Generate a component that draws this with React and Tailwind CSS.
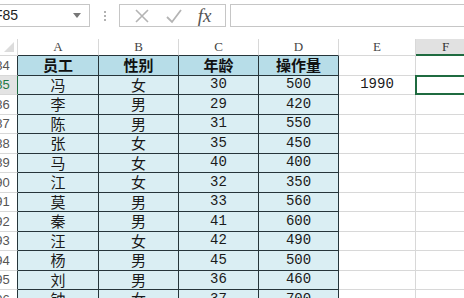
const rows = [
  { n: 85, name: "冯", sex: "女", age: 30, qty: 500, e: "1990" },
  { n: 86, name: "李", sex: "男", age: 29, qty: 420 },
  { n: 87, name: "陈", sex: "男", age: 31, qty: 550 },
  { n: 88, name: "张", sex: "女", age: 35, qty: 450 },
  { n: 89, name: "马", sex: "女", age: 40, qty: 400 },
  { n: 90, name: "江", sex: "女", age: 32, qty: 350 },
  { n: 91, name: "莫", sex: "男", age: 33, qty: 560 },
  { n: 92, name: "秦", sex: "男", age: 41, qty: 600 },
  { n: 93, name: "汪", sex: "女", age: 42, qty: 490 },
  { n: 94, name: "杨", sex: "男", age: 45, qty: 500 },
  { n: 95, name: "刘", sex: "男", age: 36, qty: 460 },
  { n: 96, name: "钟", sex: "女", age: 37, qty: 700 },
];

const cjk = { fontFamily: '"Noto Sans CJK SC", "Noto Sans CJK JP", sans-serif' };
const mono = { fontFamily: '"Liberation Mono", "DejaVu Sans Mono", monospace' };
const serif = { fontFamily: '"Liberation Serif", "DejaVu Serif", serif' };

const dark = "border-[#26353a]";

function RowHead({ n, active }) {
  return (
    <div
      className={`w-[18px] shrink-0 overflow-hidden border-b border-r border-b-[#d8d8d8] ${
        active ? "border-r-[#1f6b40] text-[#1f7a45] bg-[#e3e3e3]" : `${dark} text-[#555] bg-white`
      } flex items-center`}
    >
      <div
        className="w-[31px] shrink-0 -ml-[13px] text-center text-[13px]"
        style={{ fontFamily: '"Liberation Sans", Arial, sans-serif' }}
      >
        {n}
      </div>
    </div>
  );
}

function TCell({ w, children, header, font }) {
  return (
    <div
      className={`${w} shrink-0 border-r border-b ${dark} flex items-center justify-center ${
        header ? "bg-[#b7dde8] font-bold text-[15px] text-[#111]" : "bg-[#daeef3] text-[#1a1a1a]"
      }`}
      style={font}
    >
      {children}
    </div>
  );
}

function PlainCell({ w, children, selected }) {
  return (
    <div
      className={`${w} shrink-0 border-r border-b border-[#d8d8d8] bg-white flex items-center justify-center text-[14px] text-[#1a1a1a] relative`}
      style={mono}
    >
      {children}
      {selected && (
        <div className="absolute -left-[1px] -top-[1px] -right-[1px] -bottom-[1px] border-2 border-[#1f6b40]" />
      )}
    </div>
  );
}

function ColHead({ w, label, border, active }) {
  return (
    <div
      className={`${w} shrink-0 border-r border-r-[#d8d8d8] flex items-center justify-center text-[13px] ${
        active ? "bg-[#e1e1e1] border-b-2 border-b-[#1f6b40] text-[#333]" : `bg-white border-b ${border} text-[#444]`
      }`}
      style={serif}
    >
      {label}
    </div>
  );
}

export default function App() {
  return (
    <div className="w-[464px] h-[298px] overflow-hidden bg-white select-none">
      {/* formula bar */}
      <div className="h-[39px] flex items-start pt-[4px]">
        <div className="w-[94px] h-[23px] -ml-[4px] border border-[#c6c6c6] bg-white flex items-center justify-between pr-[8px] overflow-hidden">
          <span className="text-[14px] text-[#222] -ml-[3px]" style={{ fontFamily: '"Liberation Sans", Arial, sans-serif' }}>
            F85
          </span>
          <svg width="8" height="5" viewBox="0 0 8 5">
            <path d="M0 0 L8 0 L4 5 Z" fill="#777" />
          </svg>
        </div>
        <div className="w-[29px] h-[23px] flex flex-col items-center justify-center gap-[2px]">
          <span className="w-[2px] h-[2px] bg-[#999] rounded-full" />
          <span className="w-[2px] h-[2px] bg-[#999] rounded-full" />
          <span className="w-[2px] h-[2px] bg-[#999] rounded-full" />
        </div>
        <div className="w-[107px] h-[23px] border border-[#c6c6c6] flex items-center justify-around px-[6px]">
          <svg width="16" height="16" viewBox="0 0 16 16">
            <path d="M2 2 L14 14 M14 2 L2 14" stroke="#b4b4b4" strokeWidth="1.6" />
          </svg>
          <svg width="18" height="16" viewBox="0 0 18 16">
            <path d="M2 9 L7 14 L16 2" stroke="#b4b4b4" strokeWidth="1.8" fill="none" />
          </svg>
          <span className="italic text-[19px] text-[#555] leading-none" style={serif}>
            fx
          </span>
        </div>
        <div className="flex-1 h-[23px] ml-[4px] border border-r-0 border-[#c6c6c6] bg-white" />
      </div>

      {/* column headers */}
      <div className="flex h-[17px]">
        <div className="w-[18px] shrink-0 border-r border-b border-[#d8d8d8] bg-white relative overflow-hidden">
          <svg className="absolute right-[3px] bottom-[3px]" width="10" height="10" viewBox="0 0 10 10">
            <path d="M10 0 L10 10 L0 10 Z" fill="#dcdcdc" />
          </svg>
        </div>
        <ColHead w="w-[81px]" label="A" border={dark} />
        <ColHead w="w-[80px]" label="B" border={dark} />
        <ColHead w="w-[80px]" label="C" border={dark} />
        <ColHead w="w-[80px]" label="D" border={dark} />
        <ColHead w="w-[77px]" label="E" border="border-b-[#d8d8d8]" />
        <ColHead w="w-[60px]" label="F" active />
      </div>

      {/* table header row */}
      <div className="flex h-[19.5px]">
        <RowHead n={84} />
        <TCell w="w-[81px]" header font={cjk}>员工</TCell>
        <TCell w="w-[80px]" header font={cjk}>性别</TCell>
        <TCell w="w-[80px]" header font={cjk}>年龄</TCell>
        <TCell w="w-[80px]" header font={cjk}>操作量</TCell>
        <PlainCell w="w-[77px]" />
        <PlainCell w="w-[60px]" />
      </div>

      {rows.map((r) => (
        <div key={r.n} className="flex h-[19.5px]">
          <RowHead n={r.n} active={r.n === 85} />
          <TCell w="w-[81px]" font={{ ...cjk, fontSize: 15 }}>{r.name}</TCell>
          <TCell w="w-[80px]" font={{ ...cjk, fontSize: 15 }}>{r.sex}</TCell>
          <TCell w="w-[80px]" font={{ ...mono, fontSize: 14 }}>{r.age}</TCell>
          <TCell w="w-[80px]" font={{ ...mono, fontSize: 14 }}>{r.qty}</TCell>
          <PlainCell w="w-[77px]">{r.e}</PlainCell>
          <PlainCell w="w-[60px]" selected={r.n === 85} />
        </div>
      ))}
    </div>
  );
}
